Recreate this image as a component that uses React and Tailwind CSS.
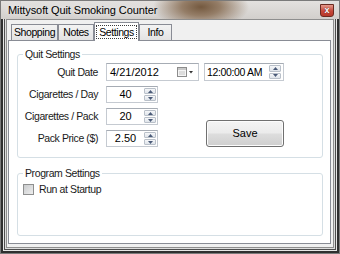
import React from "react";

const font = "font-['Liberation_Sans',Arial,sans-serif]";

const Spinner = ({ h = "h-[13px]" }) => (
  <div className={`flex w-[12px] flex-col gap-px ${h}`}>
    {["up", "down"].map((d) => (
      <div
        key={d}
        className="flex flex-1 items-center justify-center rounded-[1px] border border-[#b9c0c9] bg-[linear-gradient(to_bottom,#f6f7f9,#dfe4ea)]"
      >
        <svg width="5" height="3" viewBox="0 0 5 3">
          {d === "up" ? (
            <polygon points="0,3 2.5,0 5,3" fill="#4a5a78" />
          ) : (
            <polygon points="0,0 2.5,3 5,0" fill="#4a5a78" />
          )}
        </svg>
      </div>
    ))}
  </div>
);

const UpDown = ({ value }) => (
  <div className="flex h-[17px] w-[52px] items-center justify-self-start border border-[#c5cad1] border-t-[#a6acb4] bg-white pr-px">
    <span className="flex-1 text-center text-[11px] leading-none text-black">
      {value}
    </span>
    <Spinner />
  </div>
);

const Label = ({ children }) => (
  <span className="pr-[3px] text-right text-[10.5px] leading-none tracking-[-0.4px] text-[#1a1a1a]">
    {children}
  </span>
);

const tabs = [
  { name: "Shopping", w: "w-[47px]" },
  { name: "Notes", w: "w-[36px]" },
  { name: "Settings", w: "w-[45px]", active: true },
  { name: "Info", w: "w-[33px]" },
];

export default function App() {
  return (
    <div
      className={`flex h-[254px] w-[340px] flex-col border border-[#7a7a7a] bg-[#d8d6d4] ${font}`}
    >
      {/* title bar */}
      <div className="flex h-[18px] items-start justify-between bg-[radial-gradient(ellipse_48px_22px_at_200px_6px,#74593f_0%,#957e68_40%,rgba(214,210,206,0)_100%),linear-gradient(to_bottom,#e3e1df,#d2cfcc)] pl-[7px] pr-[5px]">
        <span className="text-[11px] leading-[18px] tracking-[-0.1px] text-black [text-shadow:0_0_6px_#ffffff]">
          Mittysoft Quit Smoking Counter
        </span>
        <div className="mt-[3px] flex h-[13px] w-[14px] items-center justify-center rounded-b-[3px] border border-[#6b2a20] bg-[linear-gradient(to_bottom,#e59a8c,#c5473a_55%,#b8382a)]">
          <span className="text-[9px] font-bold leading-none text-white [text-shadow:0_0_1px_#3a0a05]">
            x
          </span>
        </div>
      </div>

      {/* frame stripes */}
      <div className="flex flex-1 border-x-2 border-b-2 border-[#2f2f2f]">
        <div className="flex flex-1 border-x border-b border-[#e6e6e6]">
          <div className="flex flex-1 border-x border-b border-[#4e4e4e]">
            <div className="flex flex-1 border-x border-b border-[#dcdcdc]">
              {/* client */}
              <div className="flex flex-1 flex-col border border-[#8e8e8e] bg-[#f0f0f0] pb-[3px] pl-px pr-[2px] pt-[2px]">
                {/* tab headers */}
                <div className="flex h-[18px] items-end pl-[3px]">
                  {tabs.map((t) =>
                    t.active ? (
                      <div
                        key={t.name}
                        className={`relative z-10 -mb-px flex h-[19px] ${t.w} items-center justify-center border-x border-t border-[#898c95] bg-white`}
                      >
                        <span className="border border-dotted border-[#3c3c3c] px-[2px] text-[10.5px] leading-[12px] tracking-[-0.4px] text-black">
                          {t.name}
                        </span>
                      </div>
                    ) : (
                      <div
                        key={t.name}
                        className={`flex h-[16px] ${t.w} items-center justify-center border-x border-t border-[#898c95] bg-[linear-gradient(to_bottom,#f3f3f3,#e3e3e3)] text-[10.5px] leading-none tracking-[-0.4px] text-black`}
                      >
                        {t.name}
                      </div>
                    ),
                  )}
                </div>

                {/* tab page */}
                <div className="flex flex-1 flex-col border border-[#898c95] bg-white pb-[7px] pl-[8px] pr-[7px] pt-[6px]">
                  <fieldset className="rounded-[3px] border border-[#d5dfe5] pb-[10px]">
                    <legend className="ml-[5px] px-[2px] text-[10.5px] leading-[14px] tracking-[-0.4px] text-[#1a1a1a]">
                      Quit Settings
                    </legend>
                    <div className="mt-[2px] grid grid-cols-[83px_93px_80px] grid-rows-[18px_17px_17px_17px] items-center gap-x-[5px] gap-y-[5px]">
                      <Label>Quit Date</Label>
                      <div className="flex h-[18px] items-center border border-[#c5cad1] border-t-[#a6acb4] bg-white pl-[3px] pr-[4px]">
                        <span className="flex-1 text-[11px] leading-none text-black">
                          4/21/2012
                        </span>
                        <svg width="17" height="10" viewBox="0 0 17 10">
                          <rect x="0.5" y="0.5" width="9" height="9" fill="#f5f5f5" stroke="#8c8c8c" />
                          <rect x="1" y="1" width="8" height="2" fill="#c9c9c9" />
                          <line x1="2" y1="5" x2="8" y2="5" stroke="#c4c4c4" />
                          <line x1="2" y1="7" x2="8" y2="7" stroke="#c4c4c4" />
                          <polygon points="12,4 16,4 14,6.5" fill="#333" />
                        </svg>
                      </div>
                      <div className="flex h-[18px] items-center border border-[#c5cad1] border-t-[#a6acb4] bg-white pl-[2px] pr-[2px]">
                        <span className="flex-1 text-[10.5px] leading-none tracking-[-0.35px] text-black">
                          12:00:00 AM
                        </span>
                        <Spinner h="h-[14px]" />
                      </div>

                      <Label>Cigarettes / Day</Label>
                      <UpDown value="40" />
                      <div />

                      <Label>Cigarettes / Pack</Label>
                      <UpDown value="20" />
                      <button className="col-start-3 row-span-2 row-start-3 ml-[2px] h-[27px] w-[78px] self-end rounded-[3px] border border-[#707070] bg-[linear-gradient(to_bottom,#f4f4f4_0%,#ebebeb_48%,#dddddd_52%,#cfcfcf_100%)] text-[11px] leading-none text-black shadow-[inset_0_0_0_1px_#fcfcfc]">
                        Save
                      </button>

                      <Label>Pack Price ($)</Label>
                      <UpDown value="2.50" />
                    </div>
                  </fieldset>

                  <fieldset className="mt-[8px] flex-1 rounded-[3px] border border-[#d5dfe5]">
                    <legend className="ml-[5px] px-[2px] text-[10.5px] leading-[14px] tracking-[-0.4px] text-[#1a1a1a]">
                      Program Settings
                    </legend>
                    <div className="mt-[4px] flex items-center gap-[5px] pl-[5px]">
                      <div className="h-[11px] w-[11px] border border-[#8e8f8f] bg-[linear-gradient(135deg,#c9cbcd,#eeeeee)]" />
                      <span className="text-[10.5px] leading-none tracking-[-0.4px] text-[#1a1a1a]">
                        Run at Startup
                      </span>
                    </div>
                  </fieldset>
                </div>
              </div>
            </div>
          </div>
        </div>
      </div>
    </div>
  );
}
